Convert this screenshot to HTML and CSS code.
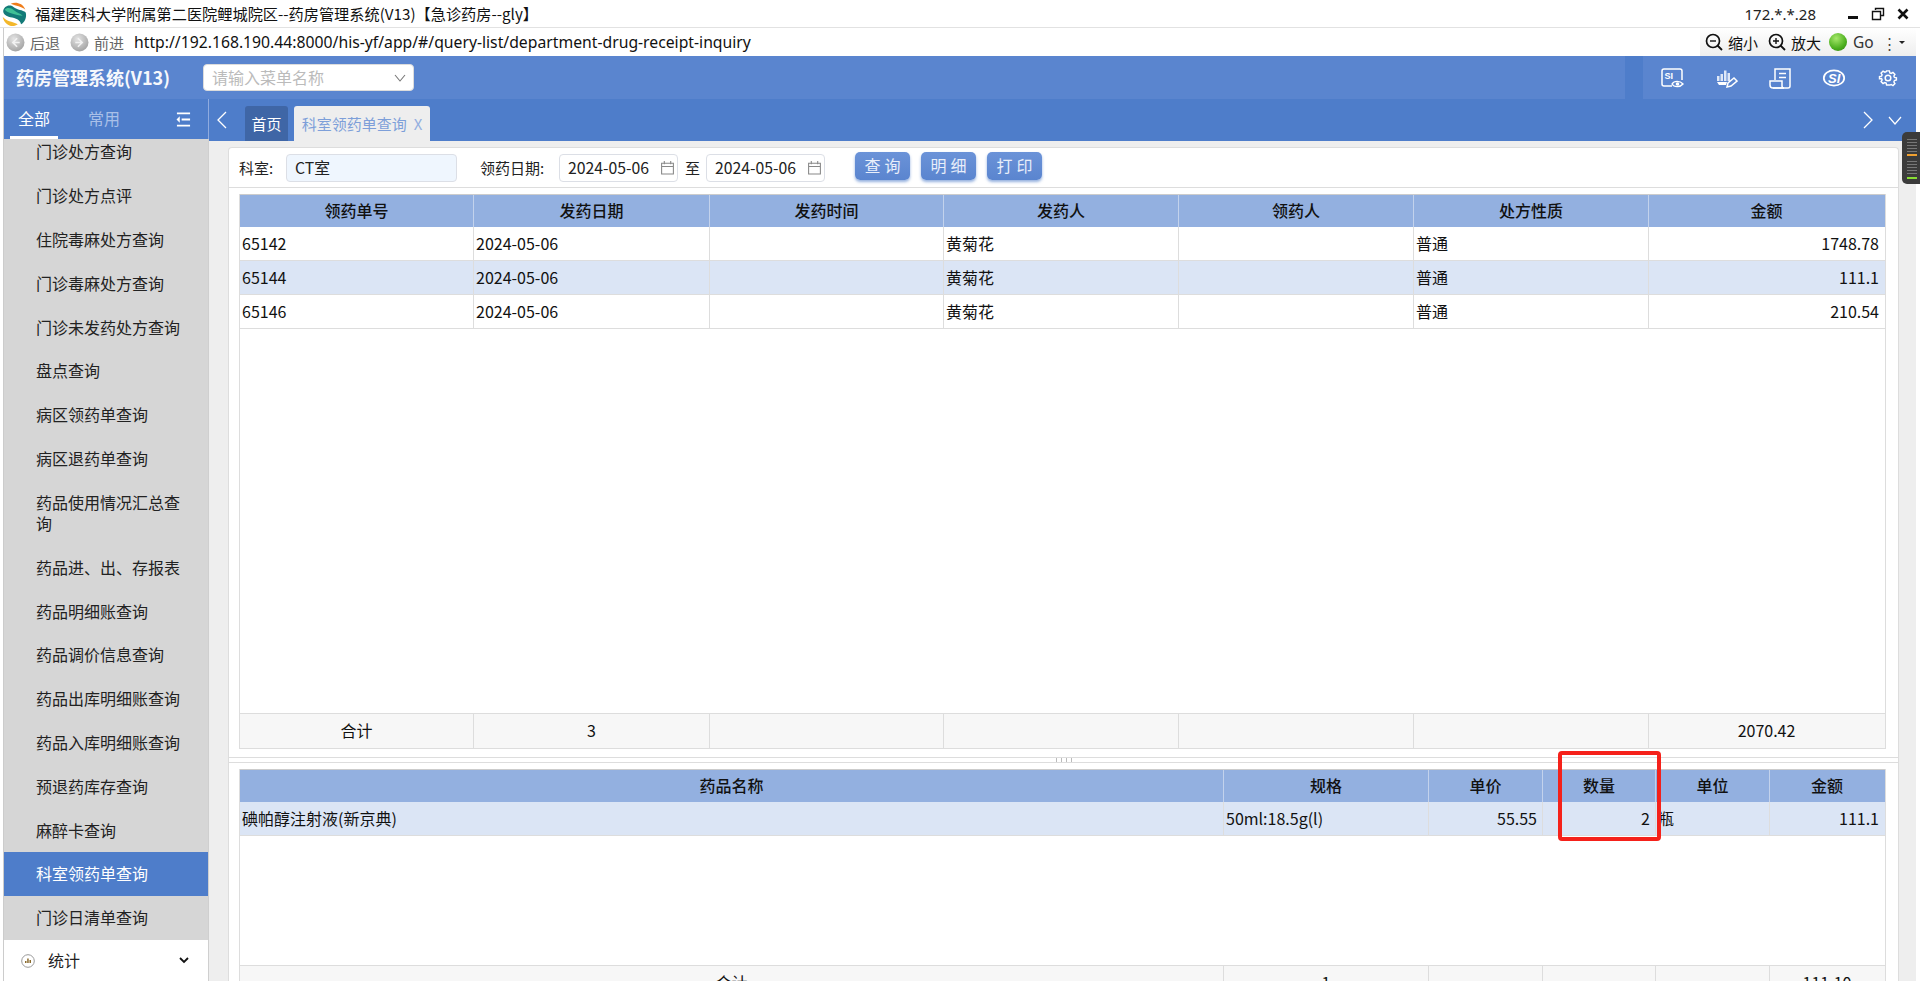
FILE: index.html
```html
<!DOCTYPE html>
<html lang="zh-CN">
<head>
<meta charset="utf-8">
<title>药房管理系统(V13)</title>
<link rel="stylesheet" href="styles.css">
</head>
<body>
<div class="titlebar">
  <svg class="logo" viewBox="0 0 24 24"><path d="M9 2.500C13 .5 20 1.500 22.500 8 19 5 14 4.500 9 2.500z" fill="#ef7d1a"/><path d="M2 9.500C2.500 4.500 8 2.500 11.500 5.500 15 8.500 20 8 22.800 10.500 24 15 22 19.500 18.500 21.500 17.500 16 11 15.500 7 14.500 4 13.500 2 12 2 9.500z" fill="#137a78"/><path d="M3.500 8C5 6 9 6 12 8.500c3 2.500 6 3 8 5-3 0-7-1-10-2S5 10 3.500 8z" fill="#3fc096"/><path d="M1.500 14.500C5 19 10 18.500 15.500 21.500 11 25 3.500 23 1.500 14.500z" fill="#f3b72a"/></svg>
  <span class="title-text">福建医科大学附属第二医院鲤城院区--药房管理系统(V13)【急诊药房--gly】</span>
  <span class="ip">172.*.*.28</span>
  <div class="winbtns">
    <svg viewBox="0 0 14 14"><rect x="2" y="9" width="10" height="3" fill="#111"/></svg>
    <svg viewBox="0 0 14 14"><path d="M4.500 3V1.500h8v7H10M1.500 4.500h8v8h-8z" fill="none" stroke="#111" stroke-width="1.400"/></svg>
    <svg viewBox="0 0 14 14"><path d="M2.500 2.500l9 9M11.500 2.500l-9 9" stroke="#111" stroke-width="2.600"/></svg>
  </div>
</div>
<div class="frame">
  <div class="navbar">
    <svg class="navball" viewBox="0 0 18 18"><defs><radialGradient id="g1" cx=".4" cy=".3" r=".8"><stop offset="0" stop-color="#e4e4e4"/><stop offset="1" stop-color="#9c9c9c"/></radialGradient></defs><circle cx="9" cy="9" r="8.500" fill="url(#g1)"/><path d="M10.500 5L6.500 9l4 4M7 9h6" fill="none" stroke="#f2f2f2" stroke-width="1.600"/></svg>
    <span class="navlabel">后退</span>
    <svg class="navball" viewBox="0 0 18 18"><circle cx="9" cy="9" r="8.500" fill="url(#g1)"/><path d="M7.500 5l4 4-4 4M11 9H5" fill="none" stroke="#f2f2f2" stroke-width="1.600"/></svg>
    <span class="navlabel">前进</span>
    <span class="url">http://192.168.190.44:8000/his-yf/app/#/query-list/department-drug-receipt-inquiry</span>
    <div class="tools">
      <svg class="lens" viewBox="0 0 18 18"><circle cx="8" cy="8" r="6.500" fill="none" stroke="#111" stroke-width="1.700"/><path d="M12.500 12.500L17 17" stroke="#111" stroke-width="1.800"/><path d="M5 8h6" stroke="#111" stroke-width="1.400"/></svg>
      <span class="tool-label">缩小</span>
      <svg class="lens" viewBox="0 0 18 18"><circle cx="8" cy="8" r="6.500" fill="none" stroke="#111" stroke-width="1.700"/><path d="M12.500 12.500L17 17" stroke="#111" stroke-width="1.800"/><path d="M5 8h6M8 5v6" stroke="#111" stroke-width="1.400"/></svg>
      <span class="tool-label">放大</span>
      <span class="ball"></span>
      <span class="go">Go</span>
      <span class="dots">⋮</span>
      <span class="caret"></span>
    </div>
  </div>
  <div class="app">
    <header class="header">
      <div class="brand">药房管理系统(V13)</div>
      <div class="menu-select"><span>请输入菜单名称</span><svg viewBox="0 0 12 8"><path d="M1 1l5 6 5-6" fill="none" stroke="#777" stroke-width="1.100"/></svg></div>
      <div class="header-seam"></div>
      <div class="header-icons">
        <svg viewBox="0 0 24 24"><path d="M12 20H4a2 2 0 0 1-2-2V5a2 2 0 0 1 2-2h16a2 2 0 0 1 2 2v9" fill="none" stroke="#fff" stroke-width="1.500"/><text x="4.500" y="12.500" class="si">SI</text><path d="M12 18c2-3.500 8-3.500 11 0-3 3.500-9 3.500-11 0z" fill="none" stroke="#fff" stroke-width="1.400"/><circle cx="17.500" cy="18" r="1.800" fill="#fff"/></svg>
        <svg viewBox="0 0 24 24"><path d="M3 10h2.500v5H3zM6.500 8H9v7H6.500zM10 4.500h2.500V15H10zM13.500 7H16v8h-2.500z" fill="#dfe8f7"/><path d="M3 16h10l-1 3H5z" fill="#fff"/><path d="M13 21l1-4 6-5 3 3-6 5z" fill="none" stroke="#fff" stroke-width="1.500"/></svg>
        <svg viewBox="0 0 24 24"><path d="M7 14V3h15v17a2 2 0 0 1-2 2H5M11 7.500h7M11 11.500h7" fill="none" stroke="#fff" stroke-width="1.500"/><path d="M2 15h12v5a2 2 0 0 0 2 2H5a3 3 0 0 1-3-3z" fill="none" stroke="#fff" stroke-width="1.500"/></svg>
        <svg viewBox="0 0 24 24"><ellipse cx="12" cy="12" rx="10.200" ry="7.600" fill="none" stroke="#fff" stroke-width="1.800"/><text x="6" y="16.500" class="si2">SI</text></svg>
        <svg viewBox="0 0 24 24"><path d="M10 2h4l.6 2.800 1.900.8 2.500-1.500 2.800 2.800-1.500 2.500.8 1.900 2.800.6v3l-2.800.7-.8 1.900 1.500 2.400-2.800 2.800-2.500-1.500-1.900.8L14 22h-4l-.6-2.800-1.900-.8-2.500 1.500-2.800-2.800 1.500-2.400-.8-1.900L0 13.100v-3l2.900-.6.800-1.900-1.500-2.500L5 2.300l2.500 1.500 1.900-.8z" transform="translate(3.500 3.500) scale(.708)" fill="none" stroke="#fff" stroke-width="2"/><circle cx="12" cy="12" r="2.800" fill="none" stroke="#fff" stroke-width="1.500"/></svg>
      </div>
    </header>
    <div class="main">
      <aside class="sidebar">
        <div class="side-tabs">
          <span class="side-tab active">全部</span>
          <span class="side-tab">常用</span>
          <svg viewBox="0 0 16 16"><path d="M1 1.500h14M6 8h9M1 14.500h14" stroke="#fff" stroke-width="2"/><path d="M4 4.500L.5 8 4 11.500z" fill="#fff"/></svg>
        </div>
        <ul class="side-list">
          <li>门诊处方查询</li>
          <li>门诊处方点评</li>
          <li>住院毒麻处方查询</li>
          <li>门诊毒麻处方查询</li>
          <li>门诊未发药处方查询</li>
          <li>盘点查询</li>
          <li>病区领药单查询</li>
          <li>病区退药单查询</li>
          <li class="double">药品使用情况汇总查询</li>
          <li>药品进、出、存报表</li>
          <li>药品明细账查询</li>
          <li>药品调价信息查询</li>
          <li>药品出库明细账查询</li>
          <li>药品入库明细账查询</li>
          <li>预退药库存查询</li>
          <li>麻醉卡查询</li>
          <li class="current">科室领药单查询</li>
          <li>门诊日清单查询</li>
        </ul>
        <div class="side-group">
          <svg viewBox="0 0 14 14"><circle cx="7" cy="7" r="6.300" fill="#fff" stroke="#999"/><path d="M4 9V7h1.500v2zM6.200 9V4.500h1.500V9zM8.500 9V6H10v3z" fill="#8a6b2d"/></svg>
          <span>统计</span>
          <svg class="group-arrow" viewBox="0 0 10 7"><path d="M1 1l4 4 4-4" fill="none" stroke="#111" stroke-width="1.800"/></svg>
        </div>
      </aside>
      <div class="workspace">
        <nav class="tabbar">
          <svg class="tab-arrow first" viewBox="0 0 10 18"><path d="M9 1L1 9l8 8" fill="none" stroke="#fff" stroke-width="1.300"/></svg>
          <span class="tab home">首页</span>
          <span class="tab open">科室领药单查询<em>X</em></span>
          <svg class="tab-arrow right" viewBox="0 0 10 18"><path d="M1 1l8 8-8 8" fill="none" stroke="#fff" stroke-width="1.300"/></svg>
          <svg class="tab-down" viewBox="0 0 14 9"><path d="M1 1l6 7 6-7" fill="none" stroke="#fff" stroke-width="1.200"/></svg>
        </nav>
        <div class="content">
          <section class="card">
            <div class="filters">
              <label class="f-label dept">科室:</label>
              <div class="field dept-field">CT室</div>
              <label class="f-label date-label">领药日期:</label>
              <div class="field date">2024-05-06<svg viewBox="0 0 14 14"><path d="M1.500 3h11v10h-11zM1.500 6h11M4 1v3M10 1v3" fill="none" stroke="#888"/></svg></div>
              <span class="f-to">至</span>
              <div class="field date">2024-05-06<svg viewBox="0 0 14 14"><path d="M1.500 3h11v10h-11zM1.500 6h11M4 1v3M10 1v3" fill="none" stroke="#888"/></svg></div>
              <button class="btn first-btn">查询</button>
              <button class="btn">明细</button>
              <button class="btn">打印</button>
            </div>
            <div class="panel top-panel">
              <div class="row head cols-a"><div>领药单号</div><div>发药日期</div><div>发药时间</div><div>发药人</div><div>领药人</div><div>处方性质</div><div>金额</div></div>
              <div class="row cols-a"><div>65142</div><div>2024-05-06</div><div></div><div>黄菊花</div><div></div><div>普通</div><div class="num">1748.78</div></div>
              <div class="row sel cols-a"><div>65144</div><div>2024-05-06</div><div></div><div>黄菊花</div><div></div><div>普通</div><div class="num">111.1</div></div>
              <div class="row cols-a"><div>65146</div><div>2024-05-06</div><div></div><div>黄菊花</div><div></div><div>普通</div><div class="num">210.54</div></div>
              <div class="spacer"></div>
              <div class="row foot cols-a"><div>合计</div><div>3</div><div></div><div></div><div></div><div></div><div>2070.42</div></div>
            </div>
            <div class="splitter"><span></span></div>
            <div class="panel bottom-panel">
              <div class="row head cols-b"><div>药品名称</div><div>规格</div><div>单价</div><div>数量</div><div>单位</div><div>金额</div></div>
              <div class="row sel cols-b"><div>碘帕醇注射液(新京典)</div><div>50ml:18.5g(l)</div><div class="num">55.55</div><div class="num">2</div><div>瓶</div><div class="num">111.1</div></div>
              <div class="spacer fixed"></div>
              <div class="row foot cols-b"><div>合计</div><div>1</div><div></div><div></div><div></div><div>111.10</div></div>
            </div>
          </section>
        </div>
      </div>
    </div>
  </div>
</div>
<div class="red-mark"></div>
<div class="meter"><i></i><b></b><i></i><u></u></div>
</body>
</html>
```
FILE: styles.css
```css
* { box-sizing: border-box; }
html, body { margin: 0; height: 981px; overflow: hidden; background: #fff; }
body { font: 16px/21px "Noto Sans CJK SC", "Noto Sans", sans-serif; color: #222; position: relative; }

.titlebar { height: 28px; display: flex; align-items: center; border-bottom: 1px solid #e2e2e2; }
.logo { width: 26px; height: 26px; margin: 0 8px 0 1px; flex: none; }
.title-text { font-size: 15.200px; color: #111; white-space: nowrap; }
.ip { margin-left: auto; font: 15px "Noto Sans", sans-serif; color: #222; margin-right: 30px; }
.winbtns { display: flex; gap: 11px; margin-right: 10px; align-items: center; }
.winbtns svg { width: 14px; height: 14px; }

.frame { height: 953px; margin-left: 3px; margin-right: 4px; border-left: 1px solid #ccc; display: flex; flex-direction: column; }
.navbar { height: 28px; flex: none; display: flex; align-items: center; padding-left: 2px; color: #111; }
.navball { width: 19px; height: 19px; flex: none; }
.navlabel { font-size: 15px; color: #666; margin: 0 8px 0 5px; width: 32px; white-space: nowrap; }
.url { font: 15.740px "Noto Sans", sans-serif; color: #111; margin-left: 0; white-space: nowrap; }
.tools { margin-left: auto; width: 216px; height: 28px; background: linear-gradient(#fff, #eee); display: flex; align-items: center; padding-left: 5px; }
.lens { width: 18px; height: 18px; flex: none; }
.tool-label { font-size: 15px; margin: 0 10px 0 5px; white-space: nowrap; }
.ball { width: 18px; height: 18px; border-radius: 50%; background: radial-gradient(circle at 40% 30%, #a6e86b, #4caf1e 60%, #2c7a10); flex: none; margin-left: -2px; }
.go { font: 15.500px "Noto Sans", sans-serif; margin-left: 6px; color: #333; }
.dots { margin-left: 8px; font-size: 15px; color: #444; }
.caret { width: 0; height: 0; margin-left: 2px; border: 3.500px solid transparent; border-top-color: #222; border-bottom: 0; }

.app { flex: 1; display: flex; flex-direction: column; min-height: 0; }
.header { height: 43px; flex: none; background: #5a85cf; display: flex; align-items: center; position: relative; }
.brand { width: 199px; padding-left: 12px; color: #fff; font-weight: 700; font-size: 18px; white-space: nowrap; opacity: .95; }
.menu-select { width: 211px; height: 27px; background: #fff; border-radius: 4px; border: 1px solid #dcdcdc; display: flex; align-items: center; justify-content: space-between; padding: 0 7px 0 8px; color: #bbb; }
.menu-select svg { width: 12px; height: 8px; }
.header-seam { width: 18px; height: 43px; background: #4e7dca; margin-left: auto; }
.header-icons { width: 273px; display: flex; justify-content: space-between; padding: 0 16px 0 17px; }
.header-icons svg { width: 24px; height: 24px; }
.si { font: 700 9px "Liberation Sans", sans-serif; fill: #fff; }
.si2 { font: italic 700 13px "Liberation Sans", sans-serif; fill: #fff; }

.main { flex: 1; display: flex; min-height: 0; }
.sidebar { width: 205px; flex: none; display: flex; flex-direction: column; background: #d6d6d6; border-right: 1px solid #cfcfcf; }
.side-tabs { height: 40px; flex: none; background: #4e7dca; border-right: 1px solid #8fabdf; margin-right: -1px; display: flex; padding-left: 6px; position: relative; align-items: center; }
.side-tab { width: 48px; height: 40px; line-height: 38px; text-align: center; color: #a9c0e8; margin-right: 22px; }
.side-tab.active { color: #fff; border-bottom: 3px solid #fff; }
.side-tabs svg { width: 15px; height: 15px; margin-left: 26px; flex: none; }
.side-list { list-style: none; margin: 0; padding: 0; flex: 1; min-height: 0; overflow: hidden; color: #222; }
.side-list li { height: 43.800px; line-height: 43px; padding-left: 32px; }
.side-list li:first-child { margin-top: -8.600px; }
.side-list li.double { height: 65px; line-height: 21px; padding: 11px 26px 0 32px; }
.side-list li.current { background: #4e7dca; color: #fff; }
.side-group { height: 41px; flex: none; background: #fff; display: flex; align-items: center; padding-left: 17px; }
.side-group > svg:first-child { width: 14px; height: 14px; margin-right: 13px; }
.group-arrow { width: 10px; height: 7px; margin-left: auto; margin-right: 19px; }

.workspace { flex: 1; min-width: 0; display: flex; flex-direction: column; }
.tabbar { height: 42px; flex: none; background: #4e7dca; display: flex; align-items: flex-end; position: relative; }
.tab { height: 35px; line-height: 35px; font-size: 15px; text-align: center; border-radius: 3px 3px 0 0; }
.tab.home { width: 43px; background: #3f66a6; color: #fff; margin-left: 18px; }
.tab.open { width: 136px; background: #eee; color: #7d9fd9; margin-left: 6px; }
.tab em { font-style: normal; margin-left: 7px; color: #94b0e0; }
.tab-arrow { width: 10px; height: 18px; align-self: center; flex: none; }
.tab-arrow.first { margin-left: 8px; }
.tab-arrow.right { margin-left: auto; }
.tab-down { width: 14px; height: 9px; align-self: center; margin: 0 14px 0 15px; flex: none; }

.content { flex: 1; min-height: 0; background: #eee; padding: 6px 17px 0 19px; overflow: hidden; }
.card { height: 834px; background: #fff; border: 1px solid #ddd; border-bottom: 0; border-radius: 4px 4px 0 0; display: flex; flex-direction: column; }
.filters { height: 40px; flex: none; border-bottom: 1px solid #ddd; display: flex; align-items: center; padding-left: 10px; }
.f-label { font-size: 15px; color: #222; white-space: nowrap; }
.dept { width: 47px; }
.field { height: 28px; border: 1px solid #dcdfe6; border-radius: 4px; font-size: 15.800px; line-height: 26px; color: #222; display: flex; align-items: center; }
.dept-field { width: 171px; background: #eff6fe; padding-left: 8px; }
.date-label { margin-left: 23px; width: 79px; }
.date { width: 119px; padding-left: 8px; justify-content: space-between; padding-right: 2px; background: #fff; white-space: nowrap; }
.date svg { width: 15px; height: 15px; flex: none; }
.f-to { margin: 0 6px 0 7px; font-size: 15px; }
.btn { width: 55px; height: 28px; border: 0; border-radius: 5px; padding: 0 0 2px 4px; background: linear-gradient(#6b93d8, #5a85cf); color: #e8eefa; font: 16px "Noto Sans CJK SC", sans-serif; letter-spacing: 4px; box-shadow: 0 2px 3px rgba(78, 125, 202, .6); margin: 0 0 4px 11px; }
.first-btn { margin-left: 30px; }

.panel { margin: 6px 12px 0 10px; border-left: 1px solid #ddd; border-right: 1px solid #ddd; display: flex; flex-direction: column; flex: none; }
.top-panel { height: 555px; border-bottom: 1px solid #ddd; }
.spacer { flex: 1; }
.spacer.fixed { flex: none; height: 129px; }
.row { display: grid; height: 34px; line-height: 33px; border-bottom: 1px solid #ddd; font-size: 16px; flex: none; color: #111; }
.row > div { padding: 0 2px; border-right: 1px solid #ddd; white-space: nowrap; overflow: hidden; }
.row > div:last-child { border-right: 0; margin-right: 1px; }
.cols-a { grid-template-columns: 234px 236px 234px 235px 235px 235px 1fr; }
.cols-b { grid-template-columns: 984px 205px 114px 113px 114px 1fr; }
.head { height: 33px; background: #93b0e0; border-bottom: 0; text-align: center; font-weight: 500; border-top: 1px solid #ccc; line-height: 31px; }
.head > div { border-right-color: #c3d2ec; }
.sel { background: #dbe5f5; }
.foot { height: 35px; background: #f7f7f7; border-top: 1px solid #ddd; border-bottom: 0; text-align: center; line-height: 33px; }
.num { text-align: right; padding-right: 5px !important; }
.splitter { height: 6px; flex: none; margin-top: 8px; border-top: 1px solid #ddd; border-bottom: 1px solid #ddd; display: flex; justify-content: center; }
.splitter span { width: 16px; background: repeating-linear-gradient(90deg, #bbb 0 1px, transparent 1px 5px); }
.bottom-panel { margin-top: 6px; }

.red-mark { position: absolute; left: 1558px; top: 751px; width: 103px; height: 90px; border: 4px solid #f5211a; border-radius: 4px; }
.meter { position: absolute; left: 1902px; top: 132px; width: 18px; height: 52px; background: #3b3b3b; border-radius: 5px 0 0 5px; padding: 7px 3px 0 5px; }
.meter i { display: block; height: 15px; background: repeating-linear-gradient(#777 0 1px, transparent 1px 3px); }
.meter b { display: block; height: 2px; background: #f0a030; margin: 0 0 5px; }
.meter u { display: block; height: 2px; background: #88dd33; margin-top: 1px; }
```
